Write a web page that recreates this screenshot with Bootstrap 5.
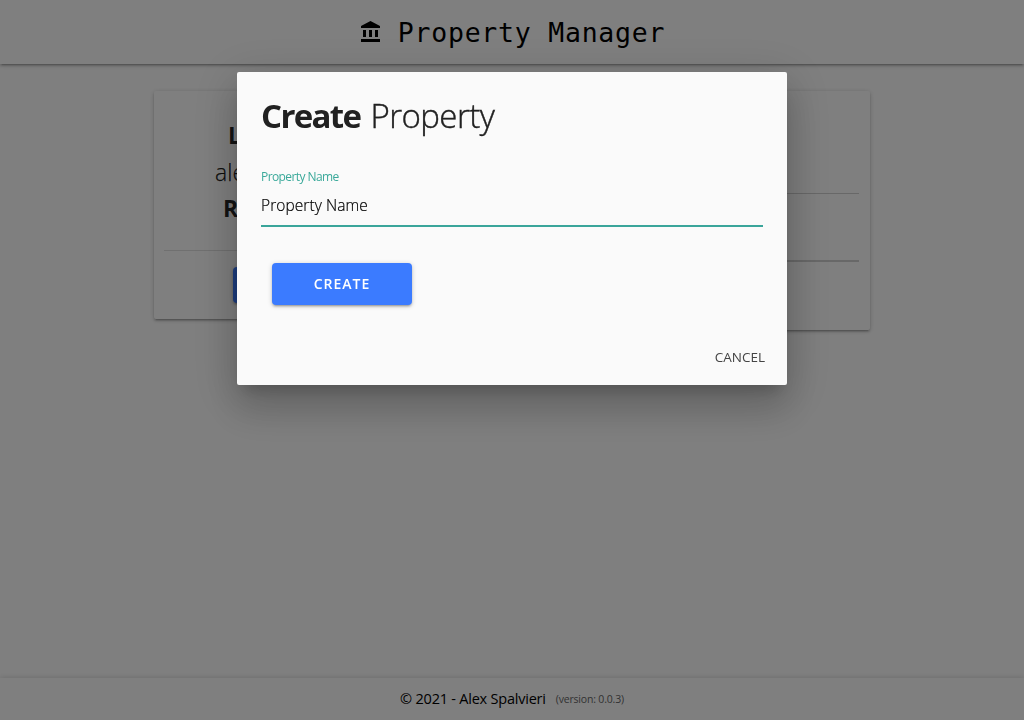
<!DOCTYPE html>
<html lang="en">
<head>
<meta charset="utf-8">
<meta name="viewport" content="width=device-width, initial-scale=1">
<title>Property Manager</title>
<link href="https://cdn.jsdelivr.net/npm/bootstrap@5.3.0/dist/css/bootstrap.min.css" rel="stylesheet">
<style>
body{font-family:"Open Sans","Noto Sans",sans-serif;color:rgba(0,0,0,.87);background:#fff;height:100vh;overflow:hidden}
.raised{box-shadow:0 2px 2px 0 rgba(0,0,0,.14),0 3px 1px -2px rgba(0,0,0,.12),0 1px 5px 0 rgba(0,0,0,.2)}
.topbar{height:64px;color:#000}
.topbar svg{width:24px;height:24px;margin-right:15px}
.title{font:26.500px/62px "DejaVu Sans Mono",monospace;letter-spacing:.76px;padding-top:2px}
.wrap{width:716px;margin-top:27px}
.panel{width:348px;border-radius:2px;border:0}
.account{height:228px;font-size:23px;line-height:36.500px;padding:26px 10px 0}
.account div{white-space:nowrap}
.account hr,.props hr{margin:0;border-top:1px solid #d0d0d0;opacity:1}
.account hr{border-top-color:#e0e0e0}
.account .l1{padding-left:64px}.account .l2{padding-left:51px;font-weight:300;-webkit-text-stroke:.25px}.account .l3{padding-left:59px}
.account hr{margin-top:23.500px}
.blue{background:#3b7bff;color:#fff;border:0;border-radius:4px}
.account .blue{width:160px;height:36px;margin:16px 0 0 69px}
.props{height:239px;padding:102px 11px 0}
.props hr+hr{margin-top:66px;border-top-width:2px}
.foot{height:42px;box-shadow:0 -1px 5px rgba(0,0,0,.13);color:#000;font-size:14.500px}
.copy{letter-spacing:-.22px}
.foot small{font-size:10.500px;color:#666;margin:2px 0 0 10px;letter-spacing:-.18px}
.modal-backdrop{--bs-backdrop-opacity:.5}
.modal-dialog{width:550px;max-width:550px;margin:72px auto 0;--bs-modal-margin:0}
.modal-content{height:313px;background:#fafafa;border:0;border-radius:2px;padding:24px;box-shadow:0 24px 38px 3px rgba(0,0,0,.14),0 9px 46px 8px rgba(0,0,0,.12),0 11px 15px -7px rgba(0,0,0,.2)}
.modal-content>*{flex-shrink:0}
.modal h4{font-size:33px;font-weight:300;line-height:39px;margin:0 0 2px;color:#212121;letter-spacing:-.55px}
.modal h4 span{-webkit-text-stroke:.4px}
.modal h4 b{font-weight:700;letter-spacing:-1.65px;margin-right:2px}
.modal label{font-size:12px;line-height:16px;color:#3aa99a;margin-top:32px;align-self:flex-start;letter-spacing:-.58px}
.field{width:502px;height:42px;border:0;border-bottom:2px solid #3aa59a;border-radius:0;background:transparent;font-size:15.500px;font-weight:300;-webkit-text-stroke:.2px;letter-spacing:.07px;color:#000;padding:0;outline:0}
.create{width:140px;height:42px;margin:36px 0 0 11px;padding:0 0 2px;font-size:14px;font-weight:600;letter-spacing:1px}
.cancel{align-self:flex-end;margin:42px -2px 0 0;font-size:13.500px;line-height:20px;color:#444;background:none;border:0;padding:0}
</style>
</head>
<body class="d-flex flex-column">
<header class="topbar raised d-flex align-items-center justify-content-center flex-shrink-0">
<svg viewBox="0 0 24 24" fill="currentColor"><path d="M4 10v7h3v-7H4zm6 0v7h3v-7h-3zM2 22h19v-3H2v3zm14-12v7h3v-7h-3zm-4.500-9L2 6v2h19V6l-9.500-5z"/></svg>
<span class="title">Property Manager</span>
</header>
<main class="wrap mx-auto d-flex justify-content-between align-items-start">
<section class="panel raised account">
<div class="l1"><b>L</b></div><div class="l2">ale</div><div class="l3"><b>R</b></div>
<hr><div class="blue raised"></div>
</section>
<section class="panel raised props"><hr><hr></section>
</main>
<footer class="foot mt-auto d-flex align-items-center justify-content-center flex-shrink-0">
<span class="copy">© 2021 - Alex Spalvieri</span><small>(version: 0.0.3)</small>
</footer>
<div class="modal-backdrop show"></div>
<div class="modal show d-block" tabindex="-1" role="dialog">
<div class="modal-dialog">
<div class="modal-content">
<h4><b>Create</b> <span>Property</span></h4>
<label for="name">Property Name</label>
<input id="name" class="field" type="text" value="Property Name">
<button class="blue raised create" type="button">CREATE</button>
<button class="cancel" type="button">CANCEL</button>
</div>
</div>
</div>
<script src="https://cdn.jsdelivr.net/npm/bootstrap@5.3.0/dist/js/bootstrap.bundle.min.js"></script>
</body>
</html>
